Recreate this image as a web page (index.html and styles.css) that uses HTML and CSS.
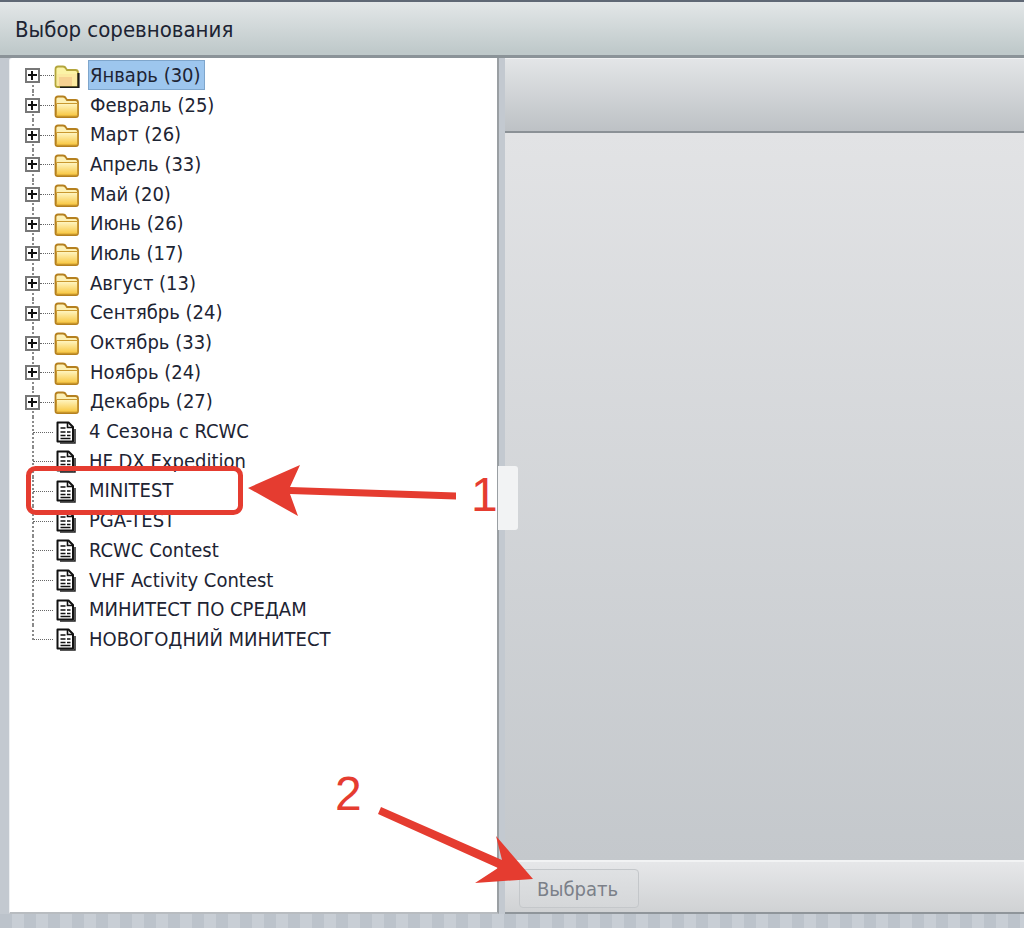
FILE: index.html
```html
<!DOCTYPE html>
<html lang="ru">
<head>
    <meta charset="UTF-8">
    <meta name="viewport" content="width=device-width, initial-scale=1.0">
    <title>Выбор соревнования</title>
    <link rel="stylesheet" href="styles.css">
</head>
<body>
    <svg class="defs" width="0" height="0">
        <defs>
            <linearGradient id="folderFill" x1="0" y1="0" x2="0" y2="1">
                <stop offset="0" stop-color="#fff6c4"/>
                <stop offset="1" stop-color="#f8c63f"/>
            </linearGradient>
            <symbol id="folder" viewBox="0 0 26 24">
                <path d="M1.500 21V5q0-2.500 2.500-2.500h5q2 0 3 2l1 1.500h8.500q2.500 0 2.500 2.500V21q0 2-2 2H3.500q-2 0-2-2z" fill="#fdf0b5" stroke="#b5801f" stroke-width="1.800"/>
                <path d="M2.500 9.500h21V21q0 1.200-1.200 1.200H3.700q-1.200 0-1.200-1.200z" fill="url(#folderFill)" stroke="#c9982f" stroke-width="1"/>
            </symbol>
            <symbol id="folderOpen" viewBox="0 0 26 24">
                <path d="M1.500 21V5q0-2.500 2.500-2.500h5q2 0 3 2l1 1.500h8.500q2.500 0 2.500 2.500V21q0 2-2 2H3.500q-2 0-2-2z" fill="#fbf3a6" stroke="#b3a53c" stroke-width="1.800"/>
                <path d="M3 10h20v12H3z" fill="#fbe9a0"/>
                <path d="M5 13h13v9H5z" fill="#f4c88e" opacity=".75"/>
                <path d="M24.500 9v14.500H6" fill="none" stroke="#1a1a1a" stroke-width="2.200"/>
            </symbol>
            <symbol id="doc" viewBox="0 0 20 23">
                <path d="M1.500 1.500h11L17 6v14.500H1.500z" fill="#fff" stroke="#111" stroke-width="2" stroke-linejoin="round"/>
                <path d="M11.500 1.500v5h5" fill="none" stroke="#111" stroke-width="1.600"/>
                <path d="M4.500 7h5M4.500 11h5M11 11h3.500M4.500 14.500h5M11 14.500h3.500M4.500 17.500h10" stroke="#111" stroke-width="1.400"/>
                <path d="M4 22h15V8" fill="none" stroke="#222" stroke-width="1.500"/>
            </symbol>
        </defs>
    </svg>

    <header class="titlebar">Выбор соревнования</header>

    <div class="workspace">
        <div class="tree-panel">
            <ul class="tree">
                <li class="tree-row">
                    <span class="expander"></span><span class="twig"></span>
                    <svg class="icon-folder"><use href="#folderOpen"/></svg>
                    <span class="label selected">Январь (30)</span>
                </li>
                <li class="tree-row"><span class="expander"></span><span class="twig"></span><svg class="icon-folder"><use href="#folder"/></svg><span class="label">Февраль (25)</span></li>
                <li class="tree-row"><span class="expander"></span><span class="twig"></span><svg class="icon-folder"><use href="#folder"/></svg><span class="label">Март (26)</span></li>
                <li class="tree-row"><span class="expander"></span><span class="twig"></span><svg class="icon-folder"><use href="#folder"/></svg><span class="label">Апрель (33)</span></li>
                <li class="tree-row"><span class="expander"></span><span class="twig"></span><svg class="icon-folder"><use href="#folder"/></svg><span class="label">Май (20)</span></li>
                <li class="tree-row"><span class="expander"></span><span class="twig"></span><svg class="icon-folder"><use href="#folder"/></svg><span class="label">Июнь (26)</span></li>
                <li class="tree-row"><span class="expander"></span><span class="twig"></span><svg class="icon-folder"><use href="#folder"/></svg><span class="label">Июль (17)</span></li>
                <li class="tree-row"><span class="expander"></span><span class="twig"></span><svg class="icon-folder"><use href="#folder"/></svg><span class="label">Август (13)</span></li>
                <li class="tree-row"><span class="expander"></span><span class="twig"></span><svg class="icon-folder"><use href="#folder"/></svg><span class="label">Сентябрь (24)</span></li>
                <li class="tree-row"><span class="expander"></span><span class="twig"></span><svg class="icon-folder"><use href="#folder"/></svg><span class="label">Октябрь (33)</span></li>
                <li class="tree-row"><span class="expander"></span><span class="twig"></span><svg class="icon-folder"><use href="#folder"/></svg><span class="label">Ноябрь (24)</span></li>
                <li class="tree-row"><span class="expander"></span><span class="twig"></span><svg class="icon-folder"><use href="#folder"/></svg><span class="label">Декабрь (27)</span></li>
                <li class="tree-row leaf"><span class="twig"></span><svg class="icon-doc"><use href="#doc"/></svg><span class="label">4 Сезона с RCWC</span></li>
                <li class="tree-row leaf"><span class="twig"></span><svg class="icon-doc"><use href="#doc"/></svg><span class="label">HF DX Expedition</span></li>
                <li class="tree-row leaf"><span class="twig"></span><svg class="icon-doc"><use href="#doc"/></svg><span class="label">MINITEST</span></li>
                <li class="tree-row leaf"><span class="twig"></span><svg class="icon-doc"><use href="#doc"/></svg><span class="label">PGA-TEST</span></li>
                <li class="tree-row leaf"><span class="twig"></span><svg class="icon-doc"><use href="#doc"/></svg><span class="label">RCWC Contest</span></li>
                <li class="tree-row leaf"><span class="twig"></span><svg class="icon-doc"><use href="#doc"/></svg><span class="label">VHF Activity Contest</span></li>
                <li class="tree-row leaf"><span class="twig"></span><svg class="icon-doc"><use href="#doc"/></svg><span class="label">МИНИТЕСТ ПО СРЕДАМ</span></li>
                <li class="tree-row leaf last"><span class="twig"></span><svg class="icon-doc"><use href="#doc"/></svg><span class="label">НОВОГОДНИЙ МИНИТЕСТ</span></li>
            </ul>
        </div>

        <div class="detail-panel">
            <div class="detail-head"></div>
            <div class="detail-body"></div>
            <div class="detail-foot">
                <button class="select-btn" disabled>Выбрать</button>
            </div>
        </div>
    </div>

    <div class="statusbar"></div>

    <!-- annotations drawn on top of the screenshot -->
    <div class="note-patch"></div>
    <svg class="notes" width="1024" height="928" viewBox="0 0 1024 928">
        <rect x="28.500" y="468.500" width="212" height="44" rx="7" fill="none" stroke="#e53c30" stroke-width="5"/>
        <path d="M248 488L300 465L290 487L456 492.500V499.500L290 494L298 516z" fill="#e53c30"/>
        <path d="M381 807L502 860L496 836L533 879L475 883L498 868L378 814z" fill="#e53c30"/>
    </svg>
    <span class="note-num one">1</span>
    <span class="note-num two">2</span>
</body>
</html>
```

FILE: styles.css
```css
* {
    box-sizing: border-box;
}
html, body {
    margin: 0;
    padding: 0;
}
body {
    position: relative;
    width: 1024px;
    height: 928px;
    overflow: hidden;
    display: flex;
    flex-direction: column;
    font-family: "DejaVu Sans Condensed", "DejaVu Sans", sans-serif;
    background: #c3c9d0;
    color: #1d2433;
}
.defs {
    position: absolute;
}
.titlebar {
    height: 58px;
    padding: 15px 0 0 15px;
    font-size: 22px;
    line-height: 26px;
    background: linear-gradient(#e3e7e8, #bfc9ca 94%);
    border-top: 2px solid #5f6875;
    border-bottom: 3px solid #8b9398;
}
.workspace {
    flex: 1;
    display: flex;
    padding-left: 9px;
}
.tree-panel {
    width: 490px;
    background: #fff;
    border-right: 2px solid #9a9fa3;
    border-bottom: 2px solid #b8bcc0;
    border-left: 1px solid #eef0f2;
    border-radius: 3px 0 0 0;
    padding-top: 3px;
}
.tree {
    list-style: none;
    margin: 0;
    padding: 0 0 0 15px;
}
.tree-row {
    position: relative;
    height: 29.700px;
    display: flex;
    align-items: center;
    font-size: 20px;
}
/* vertical dotted guide */
.tree-row::before {
    content: "";
    position: absolute;
    left: 7px;
    top: 0;
    bottom: 0;
    border-left: 2px dotted #8a8a8a;
}
.tree-row:first-child::before {
    top: 50%;
}
.tree-row.last::before {
    bottom: 50%;
}
.expander {
    position: relative;
    z-index: 1;
    width: 15px;
    height: 15px;
    border: 2px solid #777;
    background: #fff;
}
.expander::before, .expander::after {
    content: "";
    position: absolute;
    background: #111;
}
.expander::before {
    left: 1px;
    right: 1px;
    top: 4px;
    height: 2px;
}
.expander::after {
    top: 1px;
    bottom: 1px;
    left: 4px;
    width: 2px;
}
.twig {
    width: 14px;
    border-top: 1px dotted #666;
}
.leaf .twig {
    width: 20px;
    margin-left: 8px;
}
.icon-folder {
    width: 26px;
    height: 24px;
    margin: 0 9px 0 0;
    flex: none;
}
.icon-doc {
    width: 20px;
    height: 23px;
    margin: 0 12px 0 3px;
    flex: none;
}
.label {
    margin-bottom: 2px;
    padding: 0 1px;
    white-space: nowrap;
    line-height: 28px;
}
.label.selected {
    padding-right: 3px;
    background: #9dc6ee;
    outline: 1px solid #7fa6cc;
}
.detail-panel {
    width: 519px;
    margin-left: 6px;
    display: flex;
    flex-direction: column;
    border-bottom: 2px solid #8f959a;
}
.detail-head {
    height: 75px;
    background: linear-gradient(#e3e5e7, #bdc1c5);
    border-top: 1px solid #f0f1f2;
    border-bottom: 2px solid #8b9196;
}
.detail-body {
    flex: 1;
    background: linear-gradient(#e2e3e5, #c4c8cc);
}
.detail-foot {
    height: 52px;
    padding: 7px 0 0 14px;
    background: linear-gradient(#e6e7e9, #d0d2d4);
    border-top: 2px solid #f2f3f4;
}
.select-btn {
    display: block;
    width: 120px;
    height: 39px;
    padding: 0 3px 0 0;
    font-family: inherit;
    font-size: 20px;
    color: #7b8089;
    background: linear-gradient(#dfe1e3, #d5d7d9);
    border: 1px solid #c4c7ca;
    border-radius: 4px;
}
.statusbar {
    height: 14px;
    background: repeating-linear-gradient(90deg, #bcc3cb 0 12px, #c8ced5 12px 24px);
}
.note-patch {
    position: absolute;
    left: 498px;
    top: 466px;
    width: 20px;
    height: 64px;
    background: #f2f3f4;
    border-radius: 0 3px 3px 0;
}
.notes {
    position: absolute;
    left: 0;
    top: 0;
}
.note-num {
    position: absolute;
    font-family: "Liberation Sans", Arial, sans-serif;
    font-size: 48px;
    line-height: 48px;
    color: #e53c30;
}
.note-num.one {
    left: 471px;
    top: 471px;
}
.note-num.two {
    left: 335px;
    top: 770px;
}
```
